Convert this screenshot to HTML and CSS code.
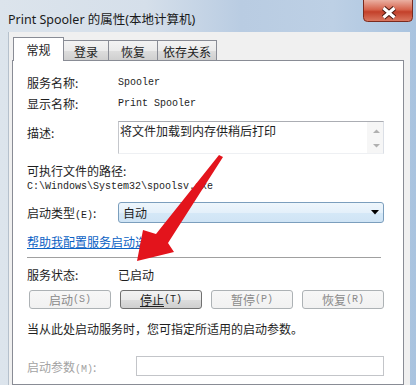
FILE: index.html
```html
<!DOCTYPE html>
<html lang="zh-CN">
<head>
<meta charset="utf-8">
<title>Print Spooler 的属性</title>
<link rel="stylesheet" href="styles.css">
</head>
<body>
<div class="window">
  <div class="titlebar">
    <div class="title">Print Spooler 的属性(本地计算机)</div>
    <div class="close">
      <svg width="50" height="22" viewBox="0 0 50 22">
        <defs>
          <linearGradient id="cg" x1="0" y1="0" x2="0" y2="1">
            <stop offset="0" stop-color="#eab0a2"/>
            <stop offset="0.45" stop-color="#d6634c"/>
            <stop offset="0.55" stop-color="#c3402a"/>
            <stop offset="1" stop-color="#db7a63"/>
          </linearGradient>
        </defs>
        <path d="M0.5 0 V17.5 Q0.5 21.5 4.5 21.5 H45.5 Q49.5 21.5 49.5 17.5 V0" fill="url(#cg)" stroke="#7a2a1e"/>
        <path d="M20.5 8 L31.5 17.5 M31.5 8 L20.5 17.5" stroke="#4a1810" stroke-width="5"/>
        <path d="M20.5 8 L31.5 17.5 M31.5 8 L20.5 17.5" stroke="#ffffff" stroke-width="3"/>
      </svg>
    </div>
  </div>
  <div class="frame">
    <div class="client">
      <div class="tabs">
        <div class="tab active">常规</div>
        <div class="tab t2">登录</div>
        <div class="tab t3">恢复</div>
        <div class="tab t4">依存关系</div>
      </div>
      <div class="page">
        <div class="row">
          <span class="label">服务名称:</span><span class="mono">Spooler</span>
        </div>
        <div class="row r2">
          <span class="label">显示名称:</span><span class="mono">Print Spooler</span>
        </div>
        <div class="row desc">
          <span class="label desc-label">描述:</span>
          <div class="textbox">
            <span class="textbox-text">将文件加载到内存供稍后打印</span>
            <div class="scrollbar">
              <svg width="16" height="31" viewBox="0 0 16 31">
                <path d="M6 11 L9.5 7.5 L13 11 Z" fill="#b0b0b0"/>
                <path d="M6 22 L9.5 25.5 L13 22 Z" fill="#b0b0b0"/>
              </svg>
            </div>
          </div>
        </div>
        <div class="path-label">可执行文件的路径:</div>
        <div class="path mono">C:\Windows\System32\spoolsv.exe</div>
        <div class="row startup">
          <span class="label">启动类型<span class="mn">(E)</span>:</span>
          <div class="combo">
            <span>自动</span>
            <svg class="combo-arrow" width="8" height="5" viewBox="0 0 8 5"><path d="M0 0 H8 L4 4.5 Z" fill="#000"/></svg>
          </div>
        </div>
        <div class="row link-row"><a class="link" href="#">帮助我配置服务启动选项。</a></div>
        <div class="sep"></div>
        <div class="row status">
          <span class="label">服务状态:</span><span>已启动</span>
        </div>
        <div class="buttons">
          <div class="btn disabled">启动<span class="mn">(S)</span></div>
          <div class="btn"><span class="ul">停止</span><span class="mn">(T)</span></div>
          <div class="btn disabled">暂停<span class="mn">(P)</span></div>
          <div class="btn disabled">恢复<span class="mn">(R)</span></div>
        </div>
        <div class="row hint">当从此处启动服务时，您可指定所适用的启动参数。</div>
        <div class="row params">
          <span class="label wide grey">启动参数<span class="mn">(M)</span>:</span>
          <div class="input"></div>
        </div>
      </div>
    </div>
  </div>
  <svg class="arrow" width="416" height="385" viewBox="0 0 416 385">
    <polygon points="137,261 143,230 156,234 219,155 223,157 168,243 174,252" fill="#e3141c"/>
  </svg>
</div>
</body>
</html>
```

FILE: styles.css
```css
* {
  box-sizing: border-box;
  margin: 0;
  padding: 0;
}

html,
body {
  width: 416px;
  height: 385px;
  overflow: hidden;
}

body {
  font-family: "Noto Sans CJK SC", "Noto Sans", sans-serif;
  font-size: 12px;
  color: #1e1e1e;
  background: #cfdbe8;
}

.window {
  position: relative;
  width: 416px;
  height: 385px;
  display: flex;
  flex-direction: column;
  background: linear-gradient(90deg, #dce4ec 0%, #d5dfea 35%, #b9cce2 58%, #bdd0e5 80%, #a9c3df 100%);
}

.titlebar {
  height: 32px;
  flex-shrink: 0;
  display: flex;
  align-items: flex-start;
}

.title {
  font-family: "Noto Sans", "Noto Sans CJK SC", sans-serif;
  font-size: 12.5px;
  line-height: 16px;
  padding: 12px 0 0 8px;
  color: #1a1a1a;
}

.close {
  margin-left: auto;
  margin-right: 3px;
  width: 50px;
  height: 22px;
}

.close svg {
  display: block;
}

.frame {
  flex: 1;
  display: flex;
  padding: 0 6px 0 8px;
  min-height: 0;
}

.client {
  flex: 1;
  display: flex;
  flex-direction: column;
  background: #f0f0f0;
  border-left: 1px solid #b5c0cc;
  padding: 5px 6px 0 3px;
}

.tabs {
  height: 23px;
  flex-shrink: 0;
  display: flex;
  align-items: flex-end;
  padding-left: 1px;
  position: relative;
  z-index: 1;
}

.tab {
  height: 20px;
  padding-top: 1px;
  display: flex;
  align-items: center;
  justify-content: center;
  border: 1px solid #898c95;
  border-bottom: none;
  background: linear-gradient(#f3f3f3, #ebebeb 50%, #dddddd 51%, #cfcfcf);
  margin-left: -1px;
  color: #1e1e1e;
}

.tab.active {
  height: 24px;
  width: 51px;
  padding-top: 0;
  margin-left: 0;
  margin-bottom: -1px;
  background: #ffffff;
  position: relative;
  z-index: 2;
}

.t2 {
  width: 46px;
}

.t3 {
  width: 50px;
}

.t4 {
  width: 60px;
}

.page {
  flex: 1;
  background: #ffffff;
  border: 1px solid #898c95;
  padding: 11px 19px 0 14px;
  display: flex;
  flex-direction: column;
}

.row {
  display: flex;
  align-items: center;
  height: 20px;
  flex-shrink: 0;
}

.label {
  width: 91px;
  flex-shrink: 0;
  color: #1e1e1e;
}

.label.wide {
  width: 109px;
}

.grey {
  color: #a3a3a3;
}

.mono {
  font-family: "Liberation Mono", monospace;
  font-size: 10px;
  color: #1e1e1e;
}

.mn {
  font-family: "Liberation Mono", monospace;
  font-size: 10px;
}

.r2 {
  margin-top: 1px;
}

.desc {
  margin-top: 8px;
  height: 33px;
  align-items: flex-start;
}

.desc-label {
  line-height: 20px;
  padding-top: 2px;
}

.textbox {
  flex: 1;
  height: 33px;
  display: flex;
  border: 1px solid;
  border-color: #abadb3 #dbdfe6 #eef0f3 #e2e3ea;
  border-left-color: #c5c7cc;
  background: #ffffff;
}

.textbox-text {
  flex: 1;
  line-height: 17px;
  padding-left: 1px;
}

.scrollbar {
  width: 16px;
  background: #f6f6f6;
}

.scrollbar svg {
  display: block;
}

.path-label {
  margin-top: 8px;
  height: 18px;
  line-height: 18px;
}

.path {
  height: 14px;
  line-height: 14px;
}

.startup {
  margin-top: 8px;
  height: 21px;
}

.combo {
  flex: 1;
  height: 21px;
  display: flex;
  align-items: center;
  justify-content: space-between;
  padding: 0 4px 0 4px;
  border: 1px solid #7b9ebd;
  border-radius: 3px;
  background: linear-gradient(#eef6fc 0%, #e4f0fa 50%, #d5e8f7 51%, #cfe4f5 100%);
}

.combo-arrow {
  display: block;
}

.link-row {
  margin-top: 8px;
}

.link {
  color: #0b62c4;
  text-decoration: underline;
}

.sep {
  margin-top: 6px;
  height: 1px;
  margin-right: 3px;
  background: #a0a0a0;
  flex-shrink: 0;
}

.status {
  margin-top: 6px;
}

.buttons {
  margin-top: 6px;
  height: 19px;
  flex-shrink: 0;
  display: flex;
  justify-content: space-between;
  padding-left: 2px;
}

.btn {
  width: 82px;
  height: 19px;
  display: flex;
  align-items: center;
  justify-content: center;
  border: 1px solid #707070;
  border-radius: 3px;
  background: linear-gradient(#f2f2f2, #ebebeb 50%, #dddddd 51%, #cfcfcf);
  color: #1e1e1e;
}

.btn.disabled {
  border-color: #adb2b5;
  background: linear-gradient(#f7f7f7, #f1f1f1);
  color: #8a8a8a;
}

.ul {
  text-decoration: underline;
}

.hint {
  margin-top: 9px;
}

.params {
  margin-top: 18px;
}

.input {
  flex: 1;
  height: 20px;
  border: 1px solid #c3c5c9;
  background: #ffffff;
}

.arrow {
  position: absolute;
  top: 0;
  left: 0;
  pointer-events: none;
}
```
